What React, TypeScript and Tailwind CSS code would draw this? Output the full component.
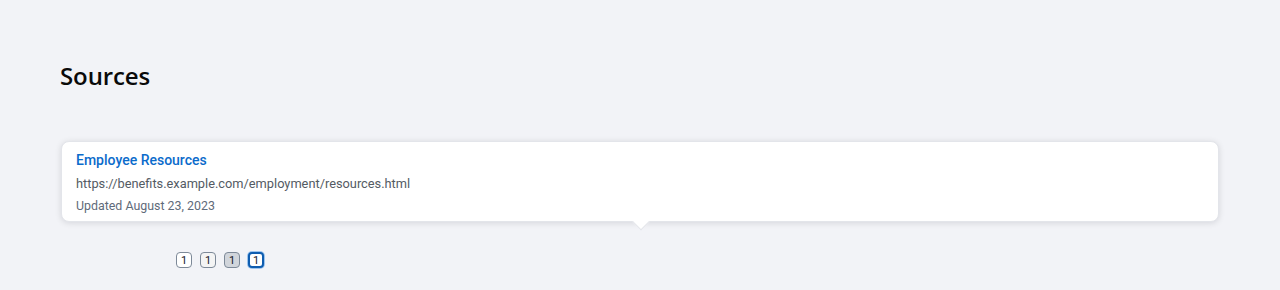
import React from "react";

const Badge = ({ variant }: { variant: "plain" | "hover" | "active" | "focus" }) => {
    const styles: Record<string, string> = {
        plain: "border border-[#7d8998] bg-white",
        hover: "border border-[#7d8998] bg-[#f4f4f4]",
        active: "border border-[#7d8998] bg-[#d1d5db]",
        focus: "border-2 border-[#0f5db0] bg-white ring-1 ring-[#9cc4ee]",
    };
    return (
        <span className={`flex items-center justify-center w-4 h-4 rounded-[4px] text-[11px] leading-none text-[#16191f] ${styles[variant]}`}>
            1
        </span>
    );
};

const App = () => {
    return (
        <div className="w-[1280px] h-[290px] bg-[#f2f3f7] overflow-hidden" style={{ fontFamily: "Roboto, 'Open Sans', sans-serif" }}>
            <div className="px-[60px] pt-[60px]">
                <h1 className="text-[24px] leading-[32px] font-semibold text-[#0a0a0a] tracking-[-0.1px]" style={{ fontFamily: "'Open Sans', Lato, sans-serif" }}>
                    Sources
                </h1>
                <div className="mt-[49px] ml-px mr-px">
                    <div className="relative bg-white rounded-[8px] border border-[#e3e5ea] shadow-[0_1px_6px_rgba(0,7,22,0.12)] h-[81px] pl-[14px] pr-[15px] pt-[8px]">
                        <a className="block text-[14px] leading-[20px] font-medium text-[#0b6bcb]">Employee Resources</a>
                        <div className="mt-[6px] text-[12.8px] leading-[16px] text-[#545b64]">https://benefits.example.com/employment/resources.html</div>
                        <div className="mt-[6px] text-[12.4px] leading-[16px] text-[#5f6b7a]">Updated August 23, 2023</div>
                        <span className="absolute left-[573px] -bottom-[7px] w-3 h-3 bg-white rotate-45 border-r border-b border-[#e3e5ea]" />
                    </div>
                </div>
                <div className="flex items-center gap-2 mt-[30px] ml-[116px]">
                    <Badge variant="plain" />
                    <Badge variant="hover" />
                    <Badge variant="active" />
                    <Badge variant="focus" />
                </div>
            </div>
        </div>
    );
};

export default App;
